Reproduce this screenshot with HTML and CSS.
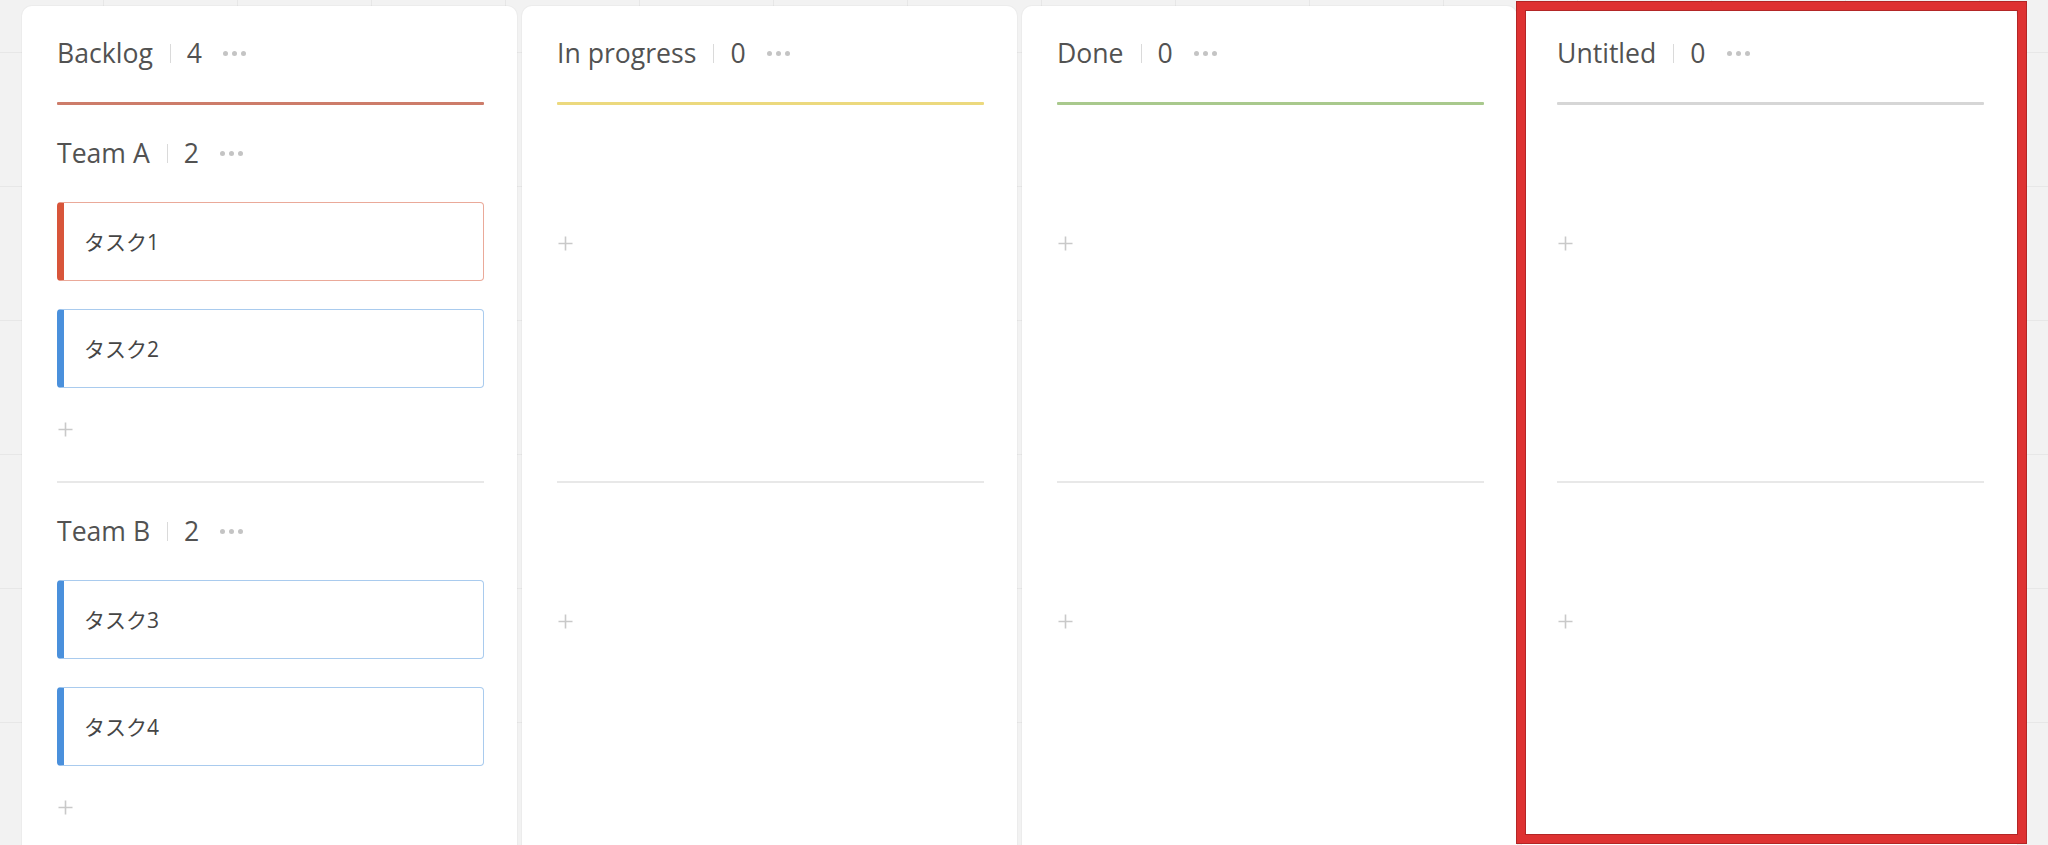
FILE: index.html
```html
<!DOCTYPE html>
<html lang="ja">
<head>
<meta charset="utf-8">
<title>Board</title>
<link rel="stylesheet" href="styles.css">
</head>
<body>
<div class="board">
  <section class="column">
    <header class="col-head">
      <span class="title">Backlog</span><span class="sep"></span><span class="count">4</span><span class="more"><i></i><i></i><i></i></span>
    </header>
    <div class="col-rule rule-backlog"></div>
    <div class="lane lane-first">
      <div class="lane-head"><span class="title">Team A</span><span class="sep"></span><span class="count">2</span><span class="more"><i></i><i></i><i></i></span></div>
      <div class="cards">
        <div class="task task-red">タスク1</div>
        <div class="task task-blue">タスク2</div>
      </div>
      <div class="add"><svg width="17" height="17" viewBox="0 0 17 17"><path d="M8.5 1.5v14M1.5 8.5h14" stroke="#c9c9c9" stroke-width="1.6" fill="none"/></svg></div>
    </div>
    <div class="lane-divider"></div>
    <div class="lane">
      <div class="lane-head"><span class="title">Team B</span><span class="sep"></span><span class="count">2</span><span class="more"><i></i><i></i><i></i></span></div>
      <div class="cards">
        <div class="task task-blue">タスク3</div>
        <div class="task task-blue">タスク4</div>
      </div>
      <div class="add"><svg width="17" height="17" viewBox="0 0 17 17"><path d="M8.5 1.5v14M1.5 8.5h14" stroke="#c9c9c9" stroke-width="1.6" fill="none"/></svg></div>
    </div>
  </section>

  <section class="column">
    <header class="col-head">
      <span class="title">In progress</span><span class="sep"></span><span class="count">0</span><span class="more"><i></i><i></i><i></i></span>
    </header>
    <div class="col-rule rule-progress"></div>
    <div class="lane lane-first">
      <div class="lane-head"></div>
      <div class="cards"></div>
      <div class="add"><svg width="17" height="17" viewBox="0 0 17 17"><path d="M8.5 1.5v14M1.5 8.5h14" stroke="#c9c9c9" stroke-width="1.6" fill="none"/></svg></div>
    </div>
    <div class="lane-divider"></div>
    <div class="lane">
      <div class="lane-head"></div>
      <div class="cards"></div>
      <div class="add"><svg width="17" height="17" viewBox="0 0 17 17"><path d="M8.5 1.5v14M1.5 8.5h14" stroke="#c9c9c9" stroke-width="1.6" fill="none"/></svg></div>
    </div>
  </section>

  <section class="column">
    <header class="col-head">
      <span class="title">Done</span><span class="sep"></span><span class="count">0</span><span class="more"><i></i><i></i><i></i></span>
    </header>
    <div class="col-rule rule-done"></div>
    <div class="lane lane-first">
      <div class="lane-head"></div>
      <div class="cards"></div>
      <div class="add"><svg width="17" height="17" viewBox="0 0 17 17"><path d="M8.5 1.5v14M1.5 8.5h14" stroke="#c9c9c9" stroke-width="1.6" fill="none"/></svg></div>
    </div>
    <div class="lane-divider"></div>
    <div class="lane">
      <div class="lane-head"></div>
      <div class="cards"></div>
      <div class="add"><svg width="17" height="17" viewBox="0 0 17 17"><path d="M8.5 1.5v14M1.5 8.5h14" stroke="#c9c9c9" stroke-width="1.6" fill="none"/></svg></div>
    </div>
  </section>

  <section class="column">
    <header class="col-head">
      <span class="title">Untitled</span><span class="sep"></span><span class="count">0</span><span class="more"><i></i><i></i><i></i></span>
    </header>
    <div class="col-rule rule-untitled"></div>
    <div class="lane lane-first">
      <div class="lane-head"></div>
      <div class="cards"></div>
      <div class="add"><svg width="17" height="17" viewBox="0 0 17 17"><path d="M8.5 1.5v14M1.5 8.5h14" stroke="#c9c9c9" stroke-width="1.6" fill="none"/></svg></div>
    </div>
    <div class="lane-divider"></div>
    <div class="lane">
      <div class="lane-head"></div>
      <div class="cards"></div>
      <div class="add"><svg width="17" height="17" viewBox="0 0 17 17"><path d="M8.5 1.5v14M1.5 8.5h14" stroke="#c9c9c9" stroke-width="1.6" fill="none"/></svg></div>
    </div>
  </section>
</div>
<div class="highlight"></div>
</body>
</html>
```

FILE: styles.css
```css
html, body {
  margin: 0;
  padding: 0;
}

body {
  position: relative;
  height: 845px;
  overflow: hidden;
  background-color: #f2f2f2;
  background-image:
    linear-gradient(to right, #e7e7e7 1px, transparent 1px),
    linear-gradient(to bottom, #e7e7e7 1px, transparent 1px);
  background-size: 134px 134px;
  background-position: 103px 52px;
  font-family: "Segoe UI", "Open Sans", "Noto Sans CJK JP", sans-serif;
  color: #505050;
}

.board {
  display: flex;
  gap: 5px;
  padding: 6px 0 0 22px;
  height: 100%;
  box-sizing: border-box;
}

.column {
  width: 495px;
  flex: none;
  box-sizing: border-box;
  background: #fff;
  border-radius: 10px 10px 0 0;
  padding: 29px 33px 0 35px;
  display: flex;
  flex-direction: column;
  box-shadow: 0 0 0 1px rgba(0, 0, 0, 0.025);
}

.col-head,
.lane-head {
  display: flex;
  align-items: center;
  height: 36px;
  font-size: 26.6px;
  line-height: 36px;
  white-space: nowrap;
}

.title {
  color: #525252;
}

.sep {
  width: 1px;
  height: 19px;
  background: #dadada;
  margin: 0 16px 0 17px;
}

.count {
  color: #525252;
}

.more {
  display: inline-flex;
  gap: 4px;
  margin-left: 21px;
  align-items: center;
}

.more i {
  display: block;
  width: 5px;
  height: 5px;
  border-radius: 50%;
  background: #c4c4c4;
}

.col-rule {
  height: 3px;
  margin-top: 31px;
  border-radius: 1px;
}

.rule-backlog { background: #cd7c6a; }
.rule-progress { background: #ecd97e; }
.rule-done { background: #a9c98d; }
.rule-untitled { background: #d6d6d6; }

.lane {
  padding-top: 30px;
  box-sizing: border-box;
  flex: 1;
}

.lane-first {
  flex: none;
  height: 376px;
}

.lane-divider {
  height: 2px;
  background: #e8e8e8;
}

.cards {
  display: flex;
  flex-direction: column;
  gap: 28px;
  margin-top: 31px;
}

.task {
  height: 79px;
  box-sizing: border-box;
  border: 1px solid #a9cbee;
  border-left: 7px solid #4a90dc;
  border-radius: 4px;
  background: #fff;
  display: flex;
  align-items: center;
  padding-left: 20px;
  padding-bottom: 2px;
  font-family: "Open Sans", "Noto Sans CJK JP", sans-serif;
  font-size: 21px;
  color: #454545;
}

.task-red {
  border-color: #eaa999;
  border-left-color: #d8553a;
}

.task-blue {
  border-color: #a9cbee;
  border-left-color: #4a90dc;
}

.add {
  margin-top: 28px;
  height: 26px;
  display: flex;
  align-items: center;
}

.add svg {
  display: block;
}

.highlight {
  position: absolute;
  left: 1517px;
  top: 2px;
  width: 509px;
  height: 841px;
  box-sizing: border-box;
  border: 8px solid #de3232;
  box-shadow: 0 0 0 1px #b32626, inset 0 0 0 1px #b32626;
  pointer-events: none;
}
```
